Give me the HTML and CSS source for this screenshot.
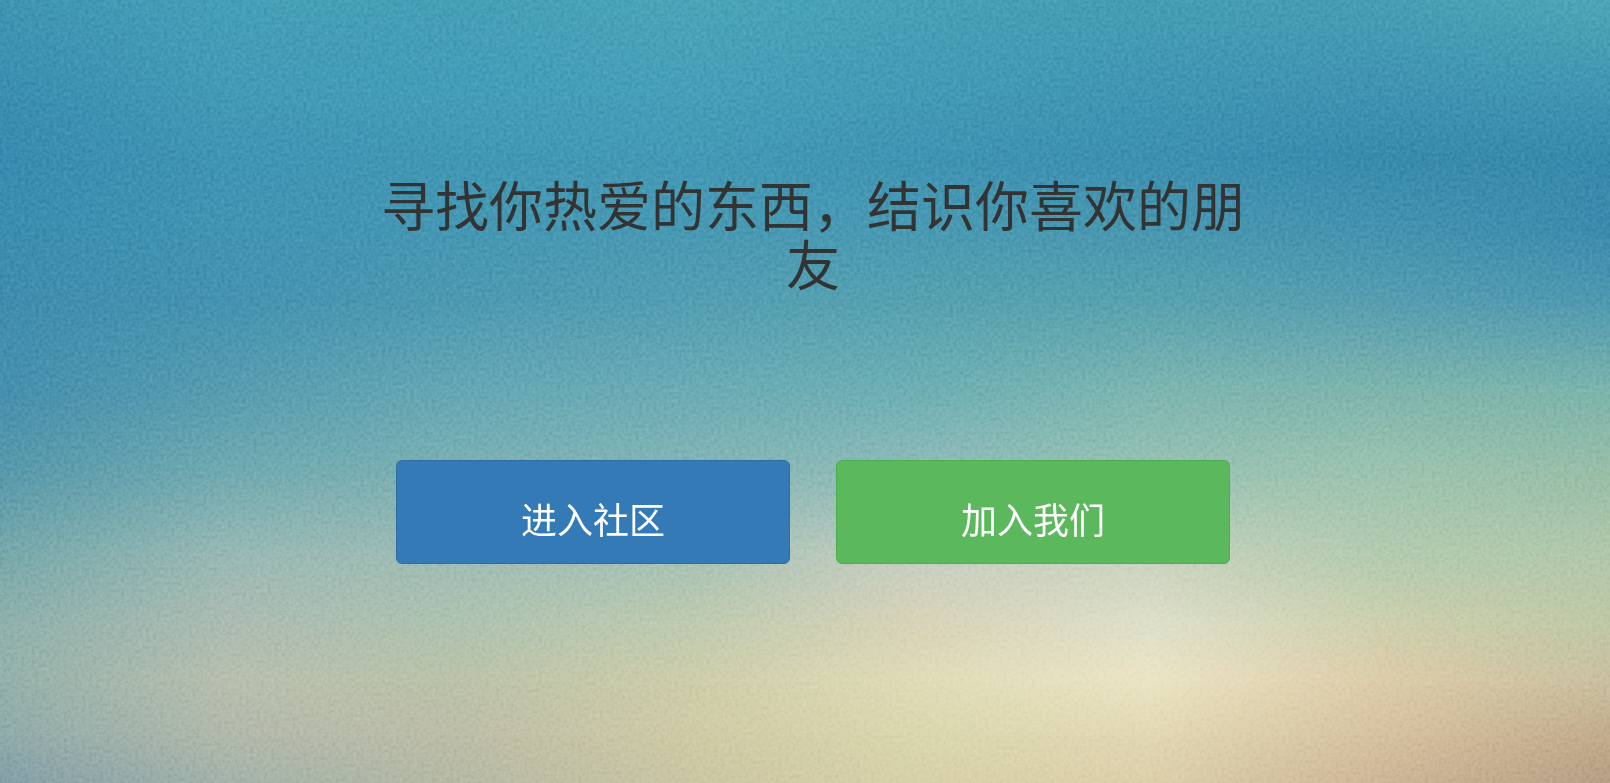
FILE: index.html
```html
<!DOCTYPE html>
<html lang="zh-CN">
<head>
<meta charset="utf-8">
<meta name="viewport" content="width=device-width, initial-scale=1">
<title>社区</title>
<link rel="stylesheet" href="styles.css">
</head>
<body>
<div class="sky" aria-hidden="true">
  <div class="band band-1"></div>
  <div class="band band-2"></div>
  <div class="band band-3"></div>
  <div class="band band-4"></div>
  <div class="band band-5"></div>
  <div class="band band-6"></div>
  <div class="band band-7"></div>
  <div class="band band-8"></div>
  <div class="band band-9"></div>
  <div class="band band-10"></div>
  <div class="band band-11"></div>
  <div class="band band-12"></div>
  <svg class="grain" width="100%" height="100%">
    <filter id="paper" x="0" y="0" width="100%" height="100%" color-interpolation-filters="sRGB">
      <feTurbulence type="fractalNoise" baseFrequency="0.28" numOctaves="2" seed="4" result="noise"/>
      <feColorMatrix in="noise" type="matrix" values="1.6 0 0 0 -0.3  1.6 0 0 0 -0.3  1.6 0 0 0 -0.3  0 0 0 0 1"/>
    </filter>
    <rect width="100%" height="100%" filter="url(#paper)"/>
  </svg>
</div>
<main class="welcome">
  <h1 class="slogan">寻找你热爱的东西，结识你喜欢的朋友</h1>
  <nav class="actions">
    <a class="btn btn-primary" href="#community">进入社区</a>
    <a class="btn btn-success" href="#join">加入我们</a>
  </nav>
</main>
</body>
</html>
```
FILE: styles.css
```css
* {
  box-sizing: border-box;
}

body {
  margin: 0;
  min-height: 100vh;
  background: #45a0b8;
  color: #333;
  font-family: KaiTi, STKaiti, "Noto Sans CJK SC", sans-serif;
}

/* Sky: horizontal colour bands that fade into one another from top to bottom */
.sky {
  position: fixed;
  inset: 0;
  z-index: -1;
  overflow: hidden;
}

.band,
.grain {
  position: absolute;
  inset: 0;
}

.band {
  background: linear-gradient(to right, var(--colors));
  mask-image: linear-gradient(to bottom, transparent var(--from), #000 var(--to));
}

.band-1 {
  --colors: #3f96b3, #45a0b8, #45a0b7, #4aa5b9, #47a1b7, #459eb4, #479fb5, #4ea7b6;
  mask-image: none;
}

.band-2 {
  --from: 0%;
  --to: 13%;
  --colors: #3a8db0, #429ab6, #439db8, #459fb8, #429ab5, #3f95b3, #3f92b1, #4094b1;
}

.band-3 {
  --from: 13%;
  --to: 20%;
  --colors: #3a8bb0, #4095b4, #4098b4, #439ab5, #3f94b3, #3d90b1, #398bad, #388aac;
}

.band-4 {
  --from: 20%;
  --to: 29%;
  --colors: #3b8db0, #4295b3, #4598b3, #4899b4, #489ab3, #4897b0, #4393b0, #3b8bae;
}

.band-5 {
  --from: 29%;
  --to: 38%;
  --colors: #3f8dae, #4493b1, #4c99b2, #539eb3, #55a1b0, #57a2af, #559db0, #4e98b0;
}

.band-6 {
  --from: 38%;
  --to: 50%;
  --colors: #4690ae, #589db0, #66a8b5, #6cacb5, #6eb0b4, #7eb6b1, #80b5ad, #7db5ac;
}

.band-7 {
  --from: 50%;
  --to: 60%;
  --colors: #5799ab, #70aab1, #7cb1b3, #84b6b5, #90bbb9, #98c2b3, #9cc3b0, #98bea8;
}

.band-8 {
  --from: 60%;
  --to: 71%;
  --colors: #78a9ab, #9ab9b4, #a0bdb5, #a7c2b5, #c8cfc2, #cad3bf, #b4cbb0, #b2c8ab;
}

.band-9 {
  --from: 71%;
  --to: 80%;
  --colors: #90b1ac, #adbcb2, #afc3b0, #c0cbb0, #d9d4b8, #dfe0ca, #cfd0ae, #c0c8a5;
}

.band-10 {
  --from: 80%;
  --to: 87%;
  --colors: #94b1ab, #b8bfae, #bcc3a9, #cecdaa, #e0dcb8, #ebe4c4, #ddccaa, #c9c0a0;
}

.band-11 {
  --from: 87%;
  --to: 94%;
  --colors: #8fabaa, #b2b9ab, #bdbda8, #cfcba6, #dad7ae, #e2d8b4, #d6c2a0, #c2ab8d;
}

.band-12 {
  --from: 94%;
  --to: 100%;
  --colors: #849fa8, #a3b3aa, #b6b9a4, #cac6a3, #d8d1a9, #dccfaa, #cdb698, #b69f84;
}

.grain {
  opacity: 0.18;
  mix-blend-mode: soft-light;
}

.welcome {
  max-width: 914px;
  margin: 0 auto;
  padding: 174px 16px 40px 32px;
}

.slogan {
  margin: 0;
  font-size: 54px;
  font-weight: 400;
  line-height: 59px;
  text-align: center;
}

.actions {
  display: grid;
  grid-template-columns: 1fr 1fr;
  gap: 46px;
  margin-top: 168px;
  padding: 0 16px;
}

.btn {
  padding: 32px 16px 20px;
  border: 1px solid;
  border-radius: 6px;
  color: #fff;
  font-size: 36px;
  font-weight: 400;
  line-height: 50px;
  text-align: center;
  text-decoration: none;
}

.btn-primary {
  background: #337ab7;
  border-color: #2e6da4;
}

.btn-success {
  background: #5cb85c;
  border-color: #4cae4c;
}

@media (max-width: 720px) {
  .welcome {
    padding: 96px 16px 40px;
  }

  .slogan {
    font-size: 36px;
    line-height: 44px;
  }

  .actions {
    grid-template-columns: 1fr;
    gap: 24px;
    margin-top: 72px;
  }
}
```
